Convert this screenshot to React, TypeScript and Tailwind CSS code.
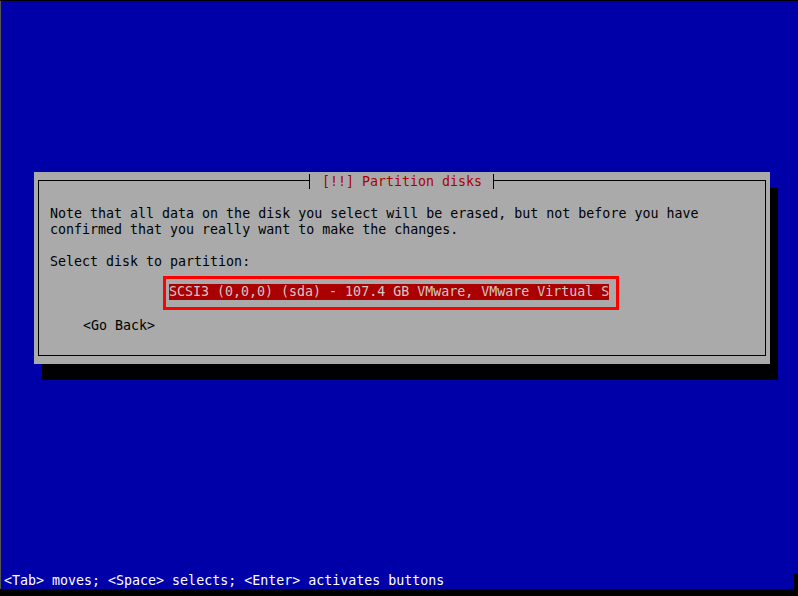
import React from "react";

const mono = "font-['DejaVu_Sans_Mono',monospace] text-[13.3px] leading-[16px] whitespace-pre";

// box-drawing tee drawn with borders so the line meets the frame exactly
function Tee({ side }: { side: "left" | "right" }) {
    return (
        <span className="relative inline-block w-[8px] h-[16px]">
            <span className={`absolute top-[6px] h-[1px] w-[4px] bg-black ${side === "left" ? "left-0" : "right-0"}`} />
            <span className="absolute left-[3px] top-0 h-[15px] w-[1px] bg-black" />
        </span>
    );
}

function Title() {
    return (
        <div className="absolute left-0 right-0 top-[-7px] flex justify-center">
            <div className="flex bg-[#aaaaaa]">
                <Tee side="left" />
                <span className="text-[#aa0000]"> [!!] Partition disks </span>
                <Tee side="right" />
            </div>
        </div>
    );
}

export default function App() {
    return (
        <div className={`w-[798px] h-[596px] bg-black pt-[1px] flex flex-col ${mono}`}>
            {/* main screen */}
            <div className="h-[572px] bg-[#0000a8] border-l border-[#555555] pt-[171px] pl-[33px]">
                <div className="w-[736px] h-[192px] bg-[#aaaaaa] shadow-[8px_16px_0_0_#000] px-[4px] pt-[8px] pb-[8px] flex">
                    <div className="relative flex-1 border border-black pt-[25px] pl-[11px] flex flex-col items-start text-black">
                        <Title />
                        <div>Note that all data on the disk you select will be erased, but not before you have</div>
                        <div>confirmed that you really want to make the changes.</div>
                        <div> </div>
                        <div>Select disk to partition:</div>
                        <div className="mt-[6px] ml-[113px] border-[3px] border-[#ff0000] pl-[3px] pr-[7px] pt-[5px] pb-[7px]">
                            <div className="bg-[#aa0000] text-[#d2c8c8]">SCSI3 (0,0,0) (sda) - 107.4 GB VMware, VMware Virtual S</div>
                        </div>
                        <div className="mt-[8px] ml-[33px]">&lt;Go Back&gt;</div>
                    </div>
                </div>
            </div>
            {/* status line */}
            <div className="w-[794px] h-[16px] bg-[#0000a8] border-l border-[#555555] pl-[3px] text-white">
                &lt;Tab&gt; moves; &lt;Space&gt; selects; &lt;Enter&gt; activates buttons
            </div>
        </div>
    );
}
